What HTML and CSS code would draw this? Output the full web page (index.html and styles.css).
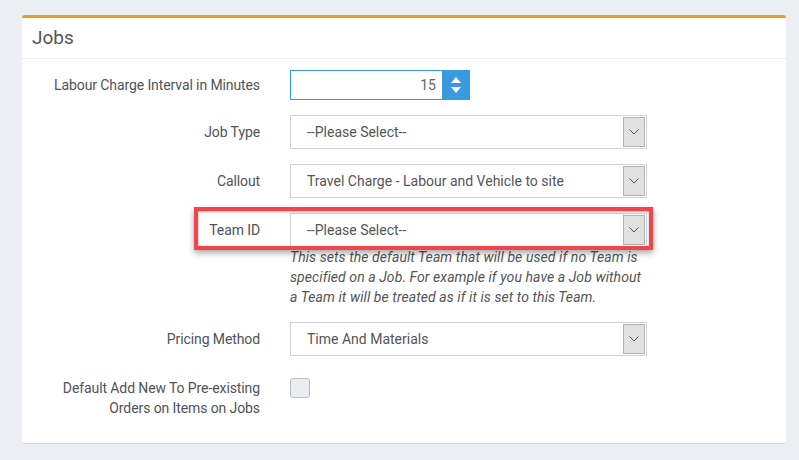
FILE: index.html
```html
<!DOCTYPE html>
<html lang="en">
<head>
    <meta charset="UTF-8">
    <title>Jobs Settings</title>
    <link rel="stylesheet" href="styles.css">
</head>
<body>

    <div class="panel">
        <div class="panel-heading">Jobs</div>

        <div class="panel-body">
            <div class="form-row">
                <label class="form-label">Labour Charge Interval in Minutes</label>
                <div class="number-input">
                    <span class="number-value">15</span>
                    <span class="spinner">
                        <svg width="10" height="16" viewBox="0 0 10 16">
                            <path d="M5 0 L10 6 L0 6 Z" fill="#fff"/>
                            <path d="M5 16 L10 10 L0 10 Z" fill="#fff"/>
                        </svg>
                    </span>
                </div>
            </div>

            <div class="form-row">
                <label class="form-label">Job Type</label>
                <div class="select-box">
                    <span class="select-value">--Please Select--</span>
                    <span class="select-arrow"><svg width="10" height="6" viewBox="0 0 10 6"><path d="M0.5 0.5 L5 5 L9.5 0.5" fill="none" stroke="#555" stroke-width="1"/></svg></span>
                </div>
            </div>

            <div class="form-row">
                <label class="form-label">Callout</label>
                <div class="select-box">
                    <span class="select-value">Travel Charge - Labour and Vehicle to site</span>
                    <span class="select-arrow"><svg width="10" height="6" viewBox="0 0 10 6"><path d="M0.5 0.5 L5 5 L9.5 0.5" fill="none" stroke="#555" stroke-width="1"/></svg></span>
                </div>
            </div>

            <div class="form-row form-row-help">
                <label class="form-label">Team ID</label>
                <div class="select-box">
                    <span class="select-value">--Please Select--</span>
                    <span class="select-arrow"><svg width="10" height="6" viewBox="0 0 10 6"><path d="M0.5 0.5 L5 5 L9.5 0.5" fill="none" stroke="#555" stroke-width="1"/></svg></span>
                </div>
                <div class="highlight"></div>
            </div>
            <p class="help-text">This sets the default Team that will be used if no Team is specified on a Job. For example if you have a Job without a Team it will be treated as if it is set to this Team.</p>

            <div class="form-row">
                <label class="form-label">Pricing Method</label>
                <div class="select-box">
                    <span class="select-value">Time And Materials</span>
                    <span class="select-arrow"><svg width="10" height="6" viewBox="0 0 10 6"><path d="M0.5 0.5 L5 5 L9.5 0.5" fill="none" stroke="#555" stroke-width="1"/></svg></span>
                </div>
            </div>

            <div class="form-row form-row-top">
                <label class="form-label">Default Add New To Pre-existing Orders on Items on Jobs</label>
                <span class="checkbox"></span>
            </div>
        </div>
    </div>

</body>
</html>
```
FILE: styles.css
```css
body {
    font-family: Roboto, 'Liberation Sans', sans-serif;
    margin: 0;
    padding: 15px 13px 17px 22px;
    background-color: #ebeef2;
    color: #555;
    font-size: 14px;
}

.panel {
    background-color: #fff;
    border-top: 3px solid #f29c1f;
    border-radius: 3px 3px 2px 2px;
    box-shadow: 0 1px 0 #d6dae0;
}

.panel-heading {
    height: 40px;
    padding-left: 10px;
    font-size: 19px;
    line-height: 39px;
    color: #555;
    border-bottom: 1px solid #eceef0;
}

.panel-body {
    padding: 11px 0 25px 0;
}

/* Label / control rows */
.form-row {
    display: flex;
    align-items: center;
    margin-bottom: 15px;
    position: relative;
}

.form-row-help {
    margin-bottom: 0;
}

.form-row-top {
    align-items: flex-start;
    margin-top: 22px;
    margin-bottom: 0;
}

.form-label {
    width: 238px;
    flex: none;
    margin-right: 30px;
    text-align: right;
    line-height: 20px;
    letter-spacing: -0.1px;
    color: #505357;
}

.form-row-top .form-label {
    padding-left: 28px;
    box-sizing: border-box;
}

/* Number input with spinner */
.number-input {
    display: flex;
    width: 180px;
    height: 30px;
    box-sizing: border-box;
    border: 1px solid #3a9ae0;
}

.number-value {
    flex: 1;
    text-align: right;
    padding-right: 6px;
    line-height: 28px;
    color: #666;
}

.spinner {
    width: 27px;
    display: flex;
    align-items: center;
    justify-content: center;
    background-color: #3a9ae0;
}

/* Select */
.select-box {
    display: flex;
    width: 357px;
    height: 34px;
    box-sizing: border-box;
    border: 1px solid #cfd3d9;
}

.select-value {
    flex: 1;
    padding-left: 16px;
    line-height: 32px;
    color: #555;
}

.select-arrow {
    width: 20px;
    margin: 1px;
    display: flex;
    align-items: center;
    justify-content: center;
    background-color: #e1e1e1;
    border: 1px solid #b3b3b3;
}

.help-text {
    margin: 0 0 15px 268px;
    width: 352px;
    font-style: italic;
    line-height: 20px;
    letter-spacing: 0.08px;
    color: #555;
}

.checkbox {
    width: 20px;
    height: 20px;
    box-sizing: border-box;
    border: 1px solid #b9bfc7;
    border-radius: 3px;
    background-color: #e9ecf0;
}

/* Red annotation box around Team ID */
.highlight {
    position: absolute;
    left: 172px;
    top: -6px;
    width: 459px;
    height: 43px;
    box-sizing: border-box;
    border: 4px solid #f2444b;
    box-shadow: 0 3px 6px rgba(0, 0, 0, 0.35), inset 0 1px 3px rgba(0, 0, 0, 0.3);
}
```
